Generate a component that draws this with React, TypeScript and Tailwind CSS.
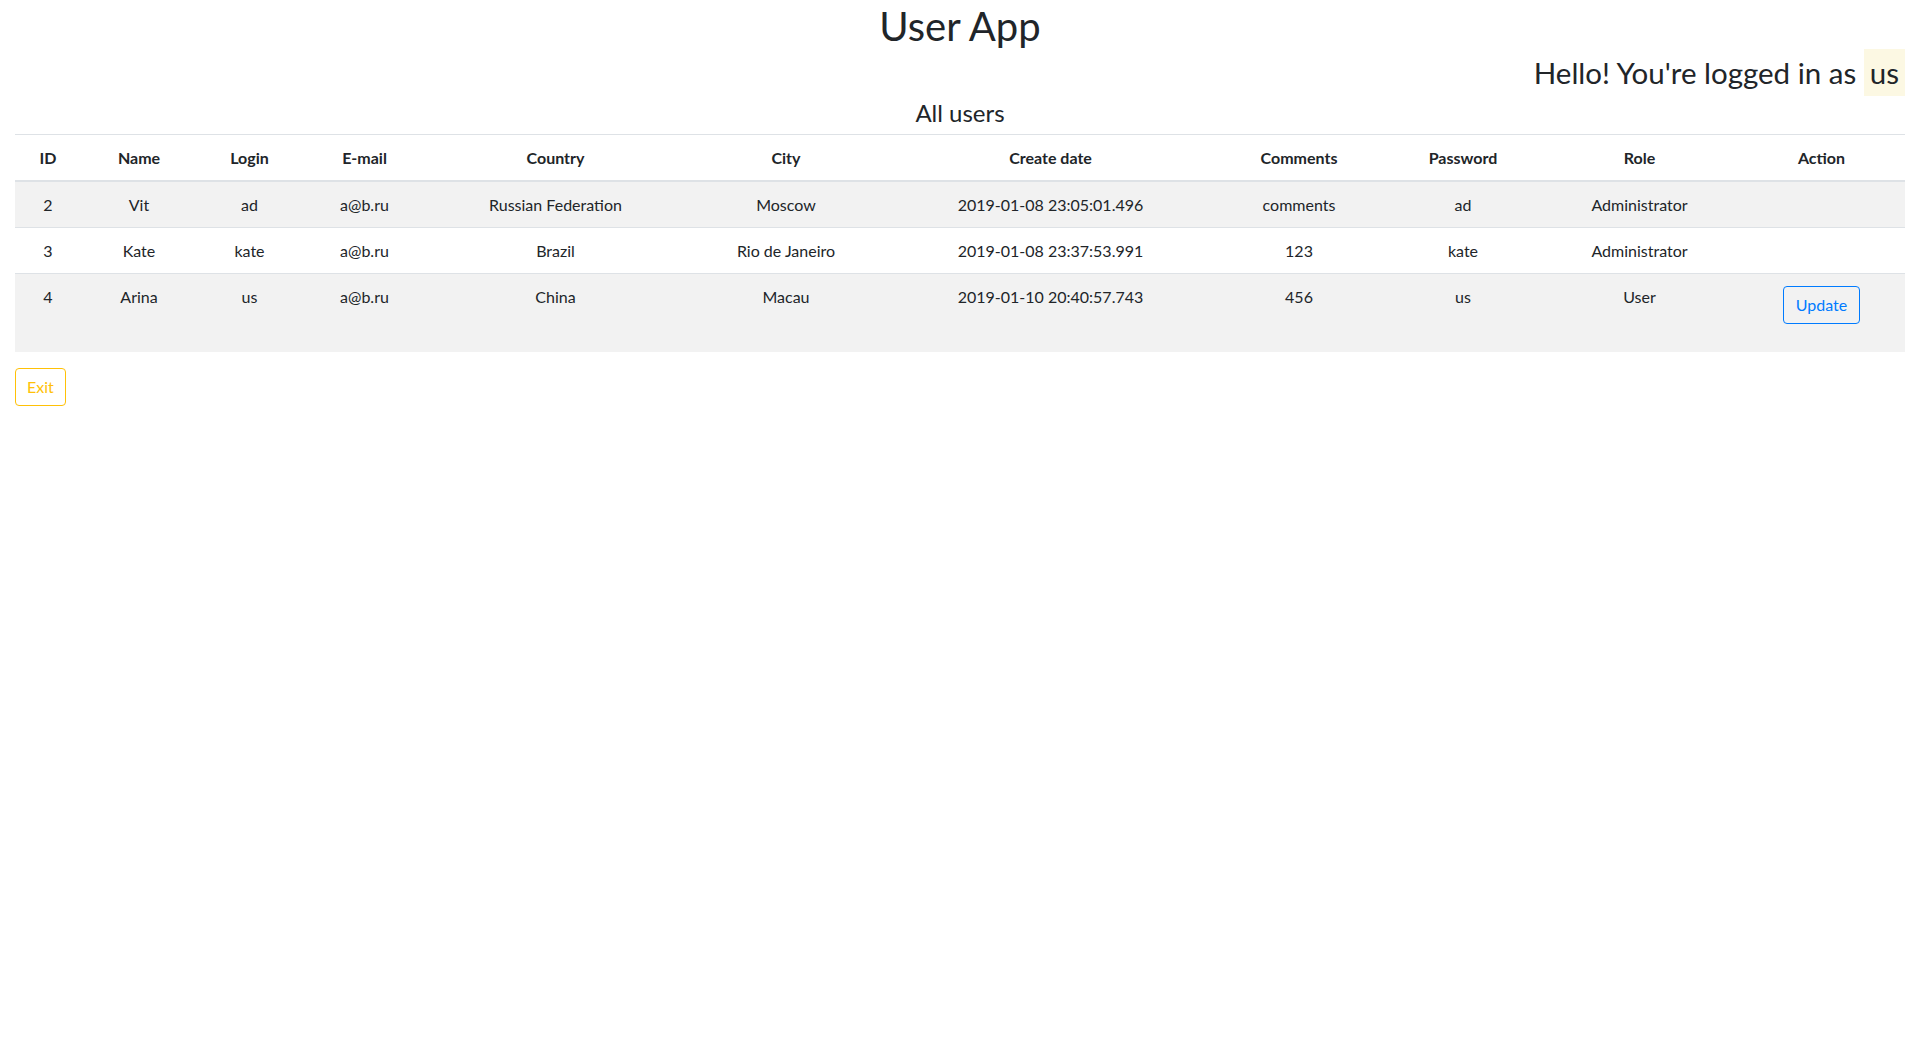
import React from 'react'

type UserRow = {
  id: number
  name: string
  login: string
  email: string
  country: string
  city: string
  created: string
  comments: string
  password: string
  role: string
  canUpdate?: boolean
}

const users: UserRow[] = [
  { id: 2, name: 'Vit', login: 'ad', email: 'a@b.ru', country: 'Russian Federation', city: 'Moscow', created: '2019-01-08 23:05:01.496', comments: 'comments', password: 'ad', role: 'Administrator' },
  { id: 3, name: 'Kate', login: 'kate', email: 'a@b.ru', country: 'Brazil', city: 'Rio de Janeiro', created: '2019-01-08 23:37:53.991', comments: '123', password: 'kate', role: 'Administrator' },
  { id: 4, name: 'Arina', login: 'us', email: 'a@b.ru', country: 'China', city: 'Macau', created: '2019-01-10 20:40:57.743', comments: '456', password: 'us', role: 'User', canUpdate: true },
]

const headers = ['ID', 'Name', 'Login', 'E-mail', 'Country', 'City', 'Create date', 'Comments', 'Password', 'Role', 'Action']
const colWidths = [66, 116, 105, 125, 257, 204, 325, 172, 156, 197, 167]

export default function App() {
  return (
    <div className="min-h-screen bg-white px-[15px] text-[#212529] font-['Lato','Liberation_Sans',sans-serif]">
      <h1 className="pt-[2px] text-center text-[40px] leading-[48px] font-normal">User App</h1>

      <div className="pt-[5px] pb-[6px] text-right text-[29.5px] leading-[36px]">
        Hello! You're logged in as <mark className="bg-[#fcf8e3] px-[6px] py-[6px] text-[#212529]">us</mark>
      </div>

      <div className="mt-[1px] mb-[7px] text-center text-[24px] leading-[29px]">All users</div>

      {/* Users table */}
      <table className="w-full table-fixed border-collapse text-[16px] leading-[21px] mb-4">
        <colgroup>
          {colWidths.map((w, i) => (
            <col key={i} style={{ width: w }} />
          ))}
        </colgroup>
        <thead>
          <tr>
            {headers.map((h) => (
              <th key={h} className="border-t border-b-2 border-[#dee2e6] p-3 text-center font-bold align-bottom">
                {h}
              </th>
            ))}
          </tr>
        </thead>
        <tbody>
          {users.map((u, idx) => (
            <tr key={u.id} className={idx % 2 === 0 ? 'bg-[#f2f2f2]' : 'bg-white'}>
              {[u.id, u.name, u.login, u.email, u.country, u.city, u.created, u.comments, u.password, u.role].map((v, i) => (
                <td key={i} className="border-t border-[#dee2e6] p-3 text-center align-top">
                  {v}
                </td>
              ))}
              <td className="border-t border-[#dee2e6] p-3 text-center align-top">
                {u.canUpdate && (
                  <button
                    type="button"
                    className="mb-4 rounded border border-[#007bff] px-3 py-[6px] text-[16px] leading-6 text-[#007bff]"
                  >
                    Update
                  </button>
                )}
              </td>
            </tr>
          ))}
        </tbody>
      </table>

      <button
        type="button"
        className="rounded border border-[#ffc107] px-[11px] py-[6px] text-[16px] leading-6 text-[#ffc107]"
      >
        Exit
      </button>
    </div>
  )
}
